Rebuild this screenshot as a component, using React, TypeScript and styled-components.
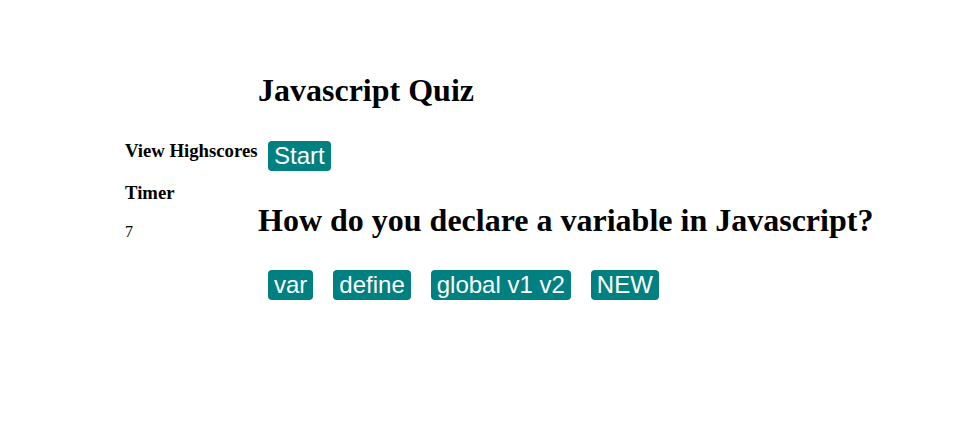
import React from "react";
import styled, { createGlobalStyle } from "styled-components";

const GlobalStyle = createGlobalStyle`
  html, body {
    margin: 0;
    padding: 0;
    background: #ffffff;
    color: #000000;
    font-family: "Liberation Serif", "Times New Roman", serif;
  }
`;

const Page = styled.div`
  display: flex;
  align-items: flex-start;
  padding: 72px 0 0 125px;
`;

const Sidebar = styled.nav`
  flex: 0 0 133px;
  padding-top: 69px;
`;

const SideHeading = styled.h3<{ $gap?: number }>`
  margin: ${(p) => p.$gap ?? 0}px 0 0;
  font-size: 18.72px;
  font-weight: bold;
  line-height: 20px;
  white-space: nowrap;
`;

const TimerValue = styled.p`
  margin: 20px 0 0;
  font-size: 16px;
  line-height: 18px;
`;

const Main = styled.main`
  display: flex;
  flex-direction: column;
  align-items: flex-start;
`;

const Heading = styled.h1<{ $gap?: number }>`
  margin: ${(p) => p.$gap ?? 0}px 0 0;
  font-size: 32px;
  font-weight: bold;
  line-height: 37px;
  white-space: nowrap;
`;

const TealButton = styled.button<{ $gap?: number }>`
  margin: ${(p) => p.$gap ?? 0}px 0 0;
  padding: 1px 6px;
  border: none;
  border-radius: 4px;
  background: #008080;
  color: #ffffff;
  font-family: "Liberation Sans", Arial, sans-serif;
  font-size: 24px;
  line-height: normal;
  cursor: pointer;
`;

const StartButton = styled(TealButton)`
  margin-left: 10px;
`;

const Answers = styled.div`
  display: flex;
  gap: 20px;
  margin-top: 31px;
  padding-left: 10px;
`;

const answers = ["var", "define", "global v1 v2", "NEW"];

export default function App() {
  return (
    <>
      <GlobalStyle />
      <Page>
        <Sidebar>
          <SideHeading>View Highscores</SideHeading>
          <SideHeading $gap={22}>Timer</SideHeading>
          <TimerValue>7</TimerValue>
        </Sidebar>
        <Main>
          <Heading>Javascript Quiz</Heading>
          <StartButton $gap={32}>Start</StartButton>
          <Heading $gap={31}>How do you declare a variable in Javascript?</Heading>
          <Answers>
            {answers.map((a) => (
              <TealButton key={a}>{a}</TealButton>
            ))}
          </Answers>
        </Main>
      </Page>
    </>
  );
}
